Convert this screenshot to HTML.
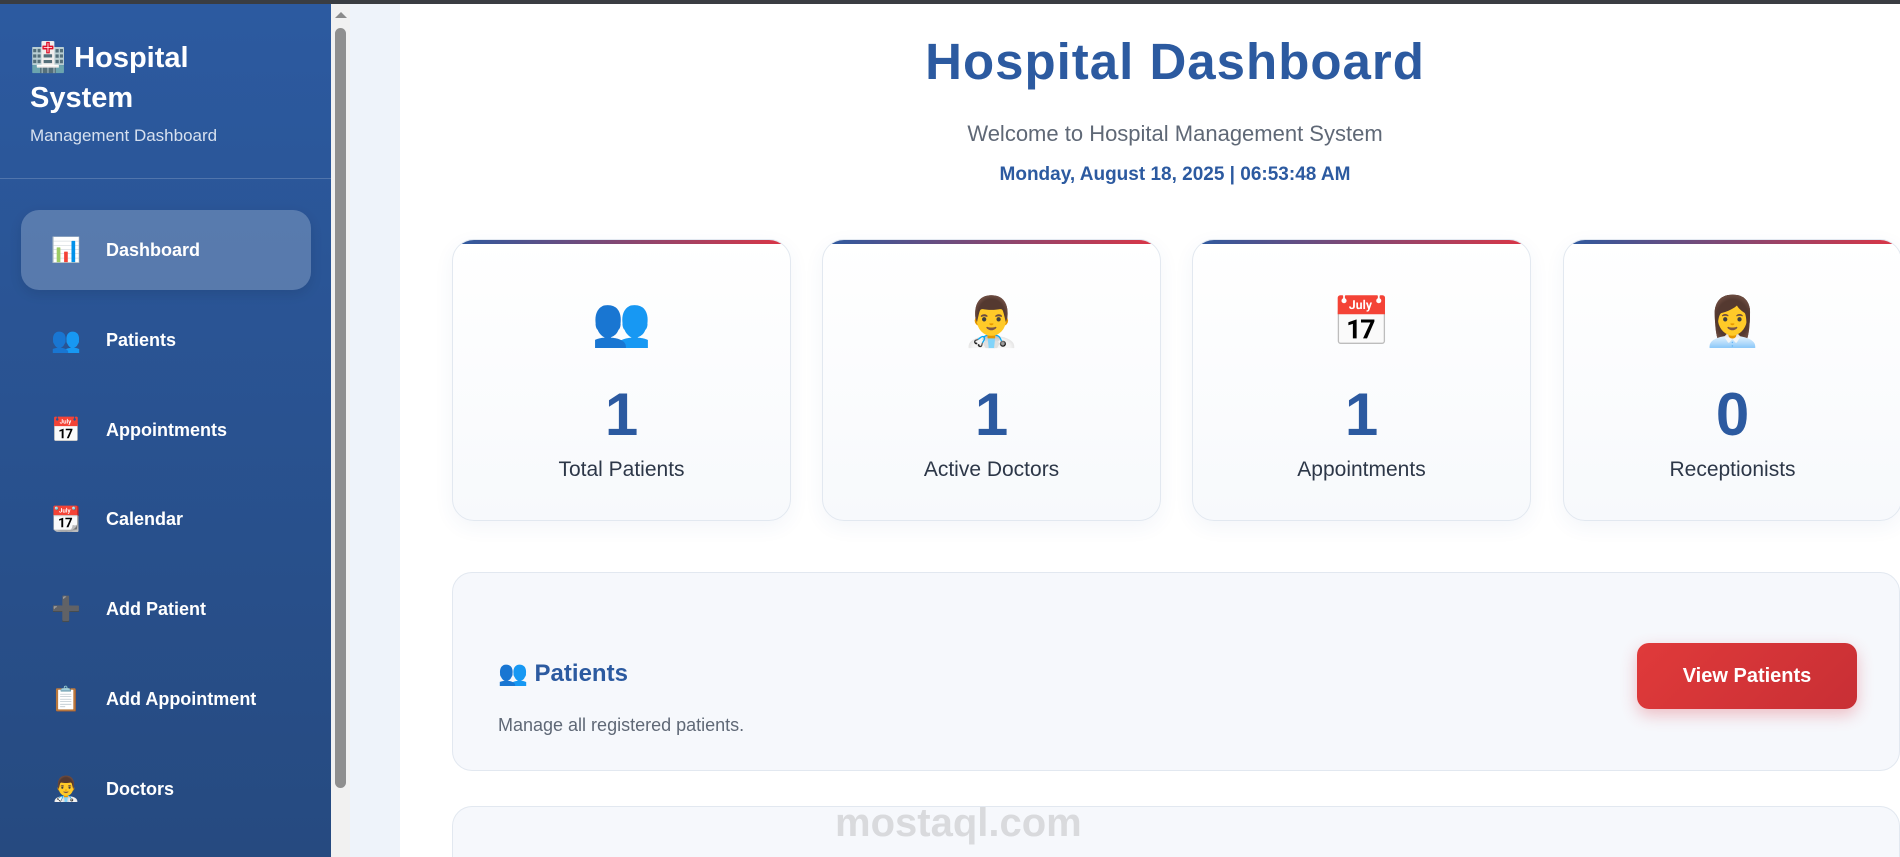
<!DOCTYPE html>
<html style="overflow:hidden;height:857px"><head><meta charset="utf-8"><style>
*{margin:0;padding:0;box-sizing:border-box}
body{width:1900px;height:857px;overflow:hidden;font-family:"Liberation Sans","DejaVu Sans",sans-serif;background:#fff;position:relative}
.topbar{position:absolute;left:0;top:0;width:1900px;height:4px;background:#3a3d42;z-index:5}
.side{position:absolute;left:0;top:4px;width:331px;height:853px;background:linear-gradient(180deg,#2c5aa0 0%,#264a80 100%);color:#fff}
.side h1{position:absolute;left:30px;top:34px;font-size:29px;line-height:40px;font-weight:bold;width:260px}
.side .sub{position:absolute;left:30px;top:122px;font-size:17px;color:#d6e0ef}
.side .div{position:absolute;left:0;top:174px;width:331px;height:1px;background:rgba(255,255,255,.18)}
.nav{position:absolute;left:21px;width:290px;height:80px;border-radius:18px;display:flex;align-items:center;font-size:18px;font-weight:bold}
.nav.act{background:rgba(255,255,255,.22);box-shadow:0 4px 12px rgba(0,0,0,.1)}
.nav .ic{width:48px;margin-left:30px;font-size:24px;line-height:1;font-family:"DejaVu Sans",sans-serif}
.nav span.t{margin-left:7px}
.sb{position:absolute;left:331px;top:4px;width:19px;height:853px;background:#f1f1f1}
.sb .th{position:absolute;left:4px;top:24px;width:11px;height:760px;background:#8f8f8f;border-radius:6px}
.sb .ar{position:absolute;left:4px;top:8px;width:0;height:0;border-left:6px solid transparent;border-right:6px solid transparent;border-bottom:6px solid #8a8a8a}
.strip{position:absolute;left:350px;top:4px;width:50px;height:853px;background:#eef3fa}
.main{position:absolute;left:400px;top:4px;width:1500px;height:853px;background:#fff;overflow:hidden}
h2{position:absolute;left:0;width:1550px;text-align:center;top:28px;font-size:51px;color:#2c5aa0;font-weight:900;letter-spacing:1px}
.wel{position:absolute;left:0;width:1550px;text-align:center;top:117px;font-size:22px;color:#5f6876}
.date{position:absolute;left:0;width:1550px;text-align:center;top:160px;font-size:19px;color:#2c5aa0;font-weight:bold}
.card{position:absolute;top:235px;width:339px;height:282px;border-radius:22px;background:linear-gradient(180deg,#fff,#f7f9fc);border:1px solid #e2e8f0;box-shadow:0 6px 20px rgba(44,90,160,.06);overflow:hidden;text-align:center}
.card:before{content:"";position:absolute;left:0;top:0;right:0;height:4px;background:linear-gradient(90deg,#2c5aa0,#dc3545)}
.card .i{position:absolute;top:52px;width:100%;font-size:48px;line-height:60px;font-family:"DejaVu Sans",sans-serif}
.card .n{position:absolute;top:140px;width:100%;font-size:60px;font-weight:900;color:#2c5aa0}
.card .l{position:absolute;top:218px;width:100%;font-size:21px;color:#2d3748}
.sec{position:absolute;left:52px;width:1448px;border-radius:20px;background:#f6f8fc;border:1px solid #e2e8f0}
.sec h3{position:absolute;left:45px;top:86px;font-size:24px;color:#2c5aa0}
.sec p{position:absolute;left:45px;top:142px;font-size:18px;color:#5f6876}
.btn{position:absolute;left:1184px;top:70px;width:220px;height:66px;border-radius:12px;background:linear-gradient(135deg,#e03a3a,#c82f35);color:#fff;font-weight:bold;font-size:20px;display:flex;align-items:center;justify-content:center;box-shadow:0 6px 16px rgba(220,53,69,.3)}
.wm{position:absolute;left:835px;top:800px;font-size:40px;line-height:46px;color:rgba(150,150,150,.3);font-weight:bold}
</style></head><body>
<div class="topbar"></div>
<div class="side">
<h1>🏥 Hospital System</h1>
<div class="sub">Management Dashboard</div>
<div class="div"></div>
<div class="nav act" style="top:206px"><span class="ic">📊</span><span class="t">Dashboard</span></div>
<div class="nav" style="top:296px"><span class="ic">👥</span><span class="t">Patients</span></div>
<div class="nav" style="top:386px"><span class="ic">📅</span><span class="t">Appointments</span></div>
<div class="nav" style="top:475px"><span class="ic">📆</span><span class="t">Calendar</span></div>
<div class="nav" style="top:565px"><span class="ic">➕</span><span class="t">Add Patient</span></div>
<div class="nav" style="top:655px"><span class="ic">📋</span><span class="t">Add Appointment</span></div>
<div class="nav" style="top:745px"><span class="ic">👨‍⚕️</span><span class="t">Doctors</span></div>
</div>
<div class="sb"><div class="ar"></div><div class="th"></div></div>
<div class="strip"></div>
<div class="main">
<h2>Hospital Dashboard</h2>
<div class="wel">Welcome to Hospital Management System</div>
<div class="date">Monday, August 18, 2025 | 06:53:48 AM</div>
<div class="card" style="left:52px"><div class="i">👥</div><div class="n">1</div><div class="l">Total Patients</div></div>
<div class="card" style="left:422px"><div class="i">👨‍⚕️</div><div class="n">1</div><div class="l">Active Doctors</div></div>
<div class="card" style="left:792px"><div class="i">📅</div><div class="n">1</div><div class="l">Appointments</div></div>
<div class="card" style="left:1163px"><div class="i">👩‍💼</div><div class="n">0</div><div class="l">Receptionists</div></div>
<div class="sec" style="top:568px;height:199px"><h3>👥 Patients</h3><p>Manage all registered patients.</p><div class="btn">View Patients</div></div>
<div class="sec" style="top:802px;height:51px;border-bottom:none;border-radius:20px 20px 0 0"></div>
</div>
<div class="wm">mostaql.com</div>
</body></html>
